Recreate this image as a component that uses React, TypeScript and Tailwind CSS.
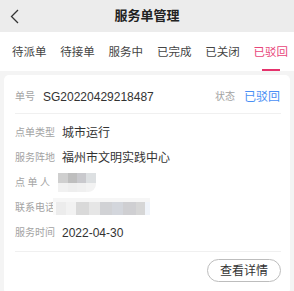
const FONT = { fontFamily: '"Liberation Sans", "Noto Sans CJK SC", sans-serif' };

const TABS = ['待派单', '待接单', '服务中', '已完成', '已关闭', '已驳回'];

function Row({ label, children }: { label: React.ReactNode; children?: React.ReactNode }) {
  return (
    <div className="flex h-[25px] items-center">
      <div className="w-[40px] shrink-0 text-[10px] leading-[14px] text-[#a3a3a3]">{label}</div>
      <div className="ml-[7px] flex items-center text-[12px] leading-[16px] text-[#333]">{children}</div>
    </div>
  );
}

export default function App() {
  return (
    <div className="h-[291px] w-[294px] overflow-hidden bg-[#f4f4f4]" style={FONT}>
      {/* Header */}
      <div className="grid h-8 grid-cols-[40px_1fr_40px] items-center bg-[#ececec]">
        <svg className="ml-[10px] h-[15px] w-[9px]" viewBox="0 0 9 15" fill="none">
          <path d="M8 1L1.5 7.5L8 14" stroke="#333" strokeWidth="1.3" />
        </svg>
        <p className="text-center text-[13px] font-bold leading-[16px] text-[#222]">服务单管理</p>
        <span />
      </div>

      {/* Tabs */}
      <div className="flex h-[39px] justify-between bg-white pl-3 pr-[6px]">
        {TABS.map((t, i) => {
          const active = i === TABS.length - 1;
          return (
            <div key={t} className="flex flex-col items-center pt-[13px]">
              <span className={`text-[11.5px] leading-[14px] ${active ? 'text-[#e8457a]' : 'text-[#444]'}`}>{t}</span>
              <span className={`mt-[10px] h-[2px] w-[18px] ${active ? 'bg-[#e5326c]' : 'bg-transparent'}`} />
            </div>
          );
        })}
      </div>

      {/* Card */}
      <div className="mx-1 mt-1 rounded-[5px] bg-white pl-[11px] pr-[9px] pt-[14px]">
        <div className="flex items-center justify-between border-b border-[#f0f0f0] pb-[8px]">
          <div className="flex h-4 items-center">
            <span className="text-[10px] leading-[14px] text-[#a3a3a3]">单号</span>
            <span className="ml-2 text-[12px] leading-[16px] text-[#333]">SG20220429218487</span>
          </div>
          <div className="flex h-4 items-center pr-[1px]">
            <span className="text-[10px] leading-[14px] text-[#a3a3a3]">状态</span>
            <span className="ml-[9px] text-[12px] leading-[16px] text-[#4a8ff5]">已驳回</span>
          </div>
        </div>

        <div className="pt-[6px]">
          <Row label="点单类型">城市运行</Row>
          <Row label="服务阵地">福州市文明实践中心</Row>
          <div className="relative">
            <Row label={<span className="tracking-[2.5px]">点单人</span>} />
            <div className="absolute left-[43px] top-[3px] flex h-[19px] flex-col overflow-hidden rounded-br-[8px]">
              <div className="flex h-[10px]">
                <span className="w-[10px] bg-[#cfcfcf]" />
                <span className="w-[9px] bg-[#bebebe]" />
                <span className="w-[9px] bg-[#c9c9cd]" />
                <span className="w-[10px] bg-[#dde0e2]" />
              </div>
              <div className="flex h-[9px]">
                <span className="w-[10px] bg-[#f1f1f1]" />
                <span className="w-[9px] bg-[#eeeeee]" />
                <span className="w-[9px] bg-[#f0f0f0]" />
                <span className="w-[10px] bg-[#f3f3f3]" />
              </div>
            </div>
          </div>
          <div className="relative">
            <Row label="联系电话" />
            <div className="absolute left-[38px] top-[3px] flex h-[17px] flex-col">
              <div className="h-[4px] w-[97px] bg-[#f6f6f6]" />
              <div className="flex h-[13px]">
                <span className="w-[3px] bg-[#fafafa]" />
                <span className="w-[10px] bg-[#ececec]" />
                <span className="w-[10px] bg-[#f2f2f2]" />
                <span className="w-[13px] bg-[#d9d9d9]" />
                <span className="w-[11px] bg-[#e6e6e6]" />
                <span className="w-[12px] bg-[#d1d2d5]" />
                <span className="w-[11px] bg-[#d3d6dc]" />
                <span className="w-[13px] bg-[#cfcfd2]" />
                <span className="w-[9px] bg-[#d6d6d6]" />
                <span className="w-[5px] bg-[#f0f4fa]" />
              </div>
            </div>
          </div>
          <Row label="服务时间">2022-04-30</Row>
        </div>

        <div className="mt-[6px] flex justify-end border-t border-[#f0f0f0] pb-3 pt-[7px]">
          <button className="h-[23px] w-[74px] rounded-full border border-[#bdbdbd] text-[12px] leading-[16px] text-[#333]">
            查看详情
          </button>
        </div>
      </div>
    </div>
  );
}
